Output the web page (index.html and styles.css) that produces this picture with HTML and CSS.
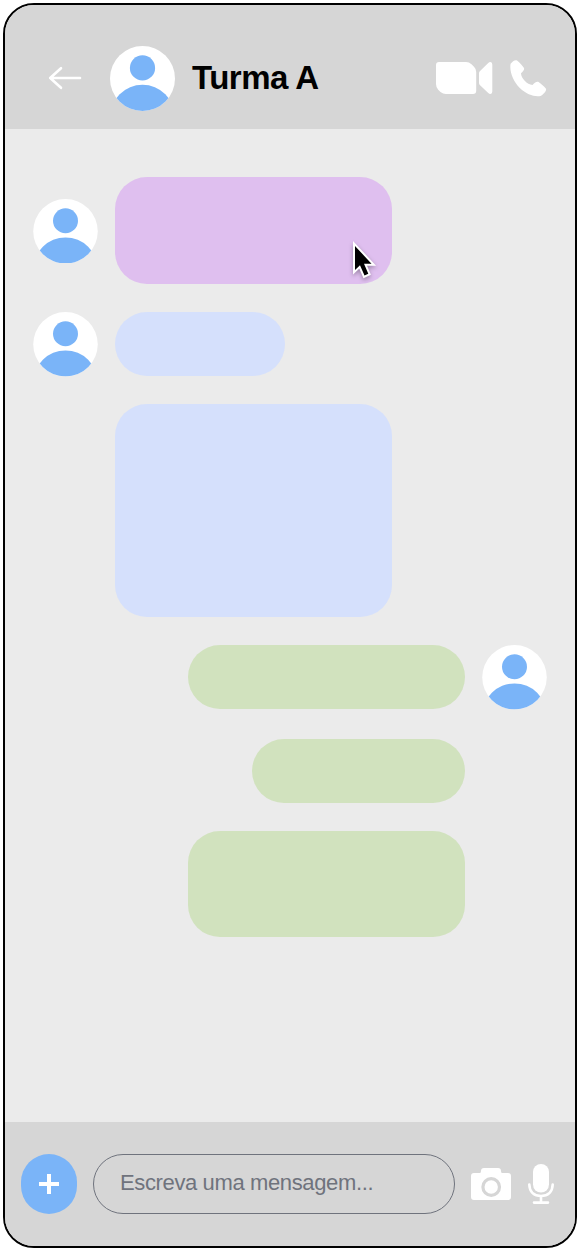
FILE: index.html
```html
<!DOCTYPE html>
<html lang="pt">
<head>
<meta charset="utf-8">
<title>Turma A</title>
<link rel="stylesheet" href="styles.css">
</head>
<body>
<svg class="defs" aria-hidden="true">
  <symbol id="avatar" viewBox="0 0 65 65">
    <clipPath id="disc"><circle cx="32.5" cy="32.5" r="32.5"/></clipPath>
    <circle cx="32.5" cy="32.5" r="32.5" fill="#fff"/>
    <g clip-path="url(#disc)" fill="#7ab4f8">
      <circle cx="32.5" cy="21.9" r="12.6"/>
      <circle cx="32.5" cy="71" r="32.3"/>
    </g>
  </symbol>
</svg>
<div class="phone">
  <header class="header">
    <svg class="back" viewBox="0 0 34 24"><path d="M13 2.200 2.200 12 13 21.800M2.200 12H32"/></svg>
    <svg class="avatar"><use href="#avatar"/></svg>
    <h1 class="title">Turma A</h1>
    <svg class="video" viewBox="0 0 57 32"><path d="M3 0H30Q33 0 35.500 2.300L38 4.800Q40.200 7 40.200 10V29Q40.200 32 37 32H10Q7 32 4.500 30L2.200 27.700Q0 25.500 0 22V3Q0 0 3 0ZM43.800 9.200 52 1.200Q53.200 0 54.500 0Q56.300 .2 56.300 2.500V29.500Q56.300 31.800 54.500 32Q53.200 32 52 30.800L43.800 23Q43 22.200 43 21V11.200Q43 10 43.800 9.200Z"/></svg>
    <svg class="call" viewBox="0 0 37 37"><path d="M.6 3.800C2.500 1.500 4.500-.3 7 .4 9.800 2.500 12.500 5.500 14 8c.5 1.600-.5 3-3 5.300C11 16 12.700 18.700 14.700 20.700c2.300 2.400 5 4 7.800 4.300 2.600-2.900 4.200-3.700 5.700-3.200 2.600 1.600 5.700 4.500 7.800 7 .7 2.200-2.500 5.500-5.500 7.200C24 37 16.500 34.300 9.800 28 3.200 21.500-.8 11.500.6 3.800Z"/></svg>
  </header>
  <main class="chat">
    <div class="row"><svg class="avatar"><use href="#avatar"/></svg><div class="bubble purple tall wide">
      <svg class="cursor" viewBox="0 0 27 40"><path d="M3 6V30L8 25.300 12.500 35.500 16.300 33.800 12 23.700H19.500Z"/></svg>
    </div></div>
    <div class="row"><svg class="avatar"><use href="#avatar"/></svg><div class="bubble blue short"></div></div>
    <div class="row follow"><div class="bubble blue wide huge"></div></div>
    <div class="row own first"><div class="bubble green wide"></div><svg class="avatar"><use href="#avatar"/></svg></div>
    <div class="row own follow"><div class="bubble green medium"></div></div>
    <div class="row own follow"><div class="bubble green wide own-tall"></div></div>
  </main>
  <footer class="footer">
    <button class="add" aria-label="Adicionar"><svg class="plus" viewBox="0 0 20 20"><path d="M10 0V20M0 10H20"/></svg></button>
    <div class="field">Escreva uma mensagem...</div>
    <svg class="camera" viewBox="0 0 40 32"><path class="fill" d="M3 5H9Q10 5 10 3Q10 0 13 0H27Q30 0 30 3Q30 5 31 5H37Q40 5 40 8V29Q40 32 37 32H3Q0 32 0 29V8Q0 5 3 5Z"/><circle class="lens" cx="20.200" cy="19" r="8.300"/></svg>
    <svg class="mic" viewBox="0 0 26 40"><rect class="fill" x="5" y="0" width="16" height="28.500" rx="8"/><path class="stand" d="M1.300 20.500C1.500 28 6 32 13 32S24.500 28 24.700 20.500M13 32.500V38M6 38.600H20"/></svg>
  </footer>
</div>
</body>
</html>
```
FILE: styles.css
```css
* { box-sizing: border-box; }
body { margin: 0; padding: 3px; background: #fff; font-family: "Liberation Sans", Arial, sans-serif; }
svg { display: block; flex: none; }
.defs { position: absolute; width: 0; height: 0; }
.phone { display: flex; flex-direction: column; width: 574px; height: 1245px; border: 2px solid #000; border-radius: 31px; overflow: hidden; background: #ebebeb; }
.header { display: flex; align-items: center; flex: none; height: 124px; padding: 22px 28px 0 43px; background: #d6d6d6; }
.avatar { width: 65px; height: 65px; }
.back { width: 34px; height: 24px; fill: none; stroke: #fff; stroke-width: 2.6; stroke-linecap: round; stroke-linejoin: round; margin-right: 28px; }
.title { margin: 0 auto 0 17px; font-size: 33px; line-height: 40px; font-weight: 700; letter-spacing: -0.5px; color: #000; white-space: nowrap; }
.video { width: 57px; height: 32px; fill: #fff; margin-right: 17px; }
.call { width: 37px; height: 37px; fill: #fff; }
.chat { flex: 1; display: flex; flex-direction: column; gap: 28px; padding: 48px 28px 0; }
.row { display: flex; align-items: center; gap: 17px; }
.row .avatar { height: 64.5px; }
.follow { padding-left: 82px; }
.row .avatar { margin-bottom: -0.5px; }
.own { justify-content: flex-end; }
.own.first { margin-bottom: 2px; }
.own.follow { padding: 0 82px 0 0; }
.bubble { position: relative; height: 64px; border-radius: 32px; }
.wide { width: 277px; }
.short { width: 170px; }
.medium { width: 213px; }
.tall { height: 107px; }
.huge { height: 213px; }
.own-tall { height: 106px; }
.purple { background: #dfbfef; }
.blue { background: #d5e0fc; }
.green { background: #d1e2be; }
.cursor { position: absolute; left: 237px; top: 63px; width: 27px; height: 40px; fill: #000; stroke: #fff; stroke-width: 4; paint-order: stroke; filter: drop-shadow(0 2px 2px rgba(0, 0, 0, .3)); }
.footer { display: flex; align-items: center; flex: none; height: 124px; padding: 0 21px 0 16px; background: #d6d6d6; }
.add { display: flex; align-items: center; justify-content: center; flex: none; width: 56px; height: 60px; padding: 0; border: 0; border-radius: 28px; background: #7ab4f8; }
.plus { width: 20px; height: 20px; stroke: #fff; stroke-width: 4; }
.field { width: 362px; height: 60px; margin: 0 16px; padding-left: 26px; border: 1px solid #6f737d; border-radius: 30px; font-size: 22px; line-height: 56px; letter-spacing: -0.37px; color: #6f737d; white-space: nowrap; }
.camera { width: 40px; height: 32px; margin-right: 17px; }
.mic { width: 26px; height: 40px; }
.fill { fill: #fff; }
.lens { fill: #fff; stroke: #d6d6d6; stroke-width: 3.2; }
.stand { fill: none; stroke: #fff; stroke-width: 2.6; stroke-linecap: round; }
```
